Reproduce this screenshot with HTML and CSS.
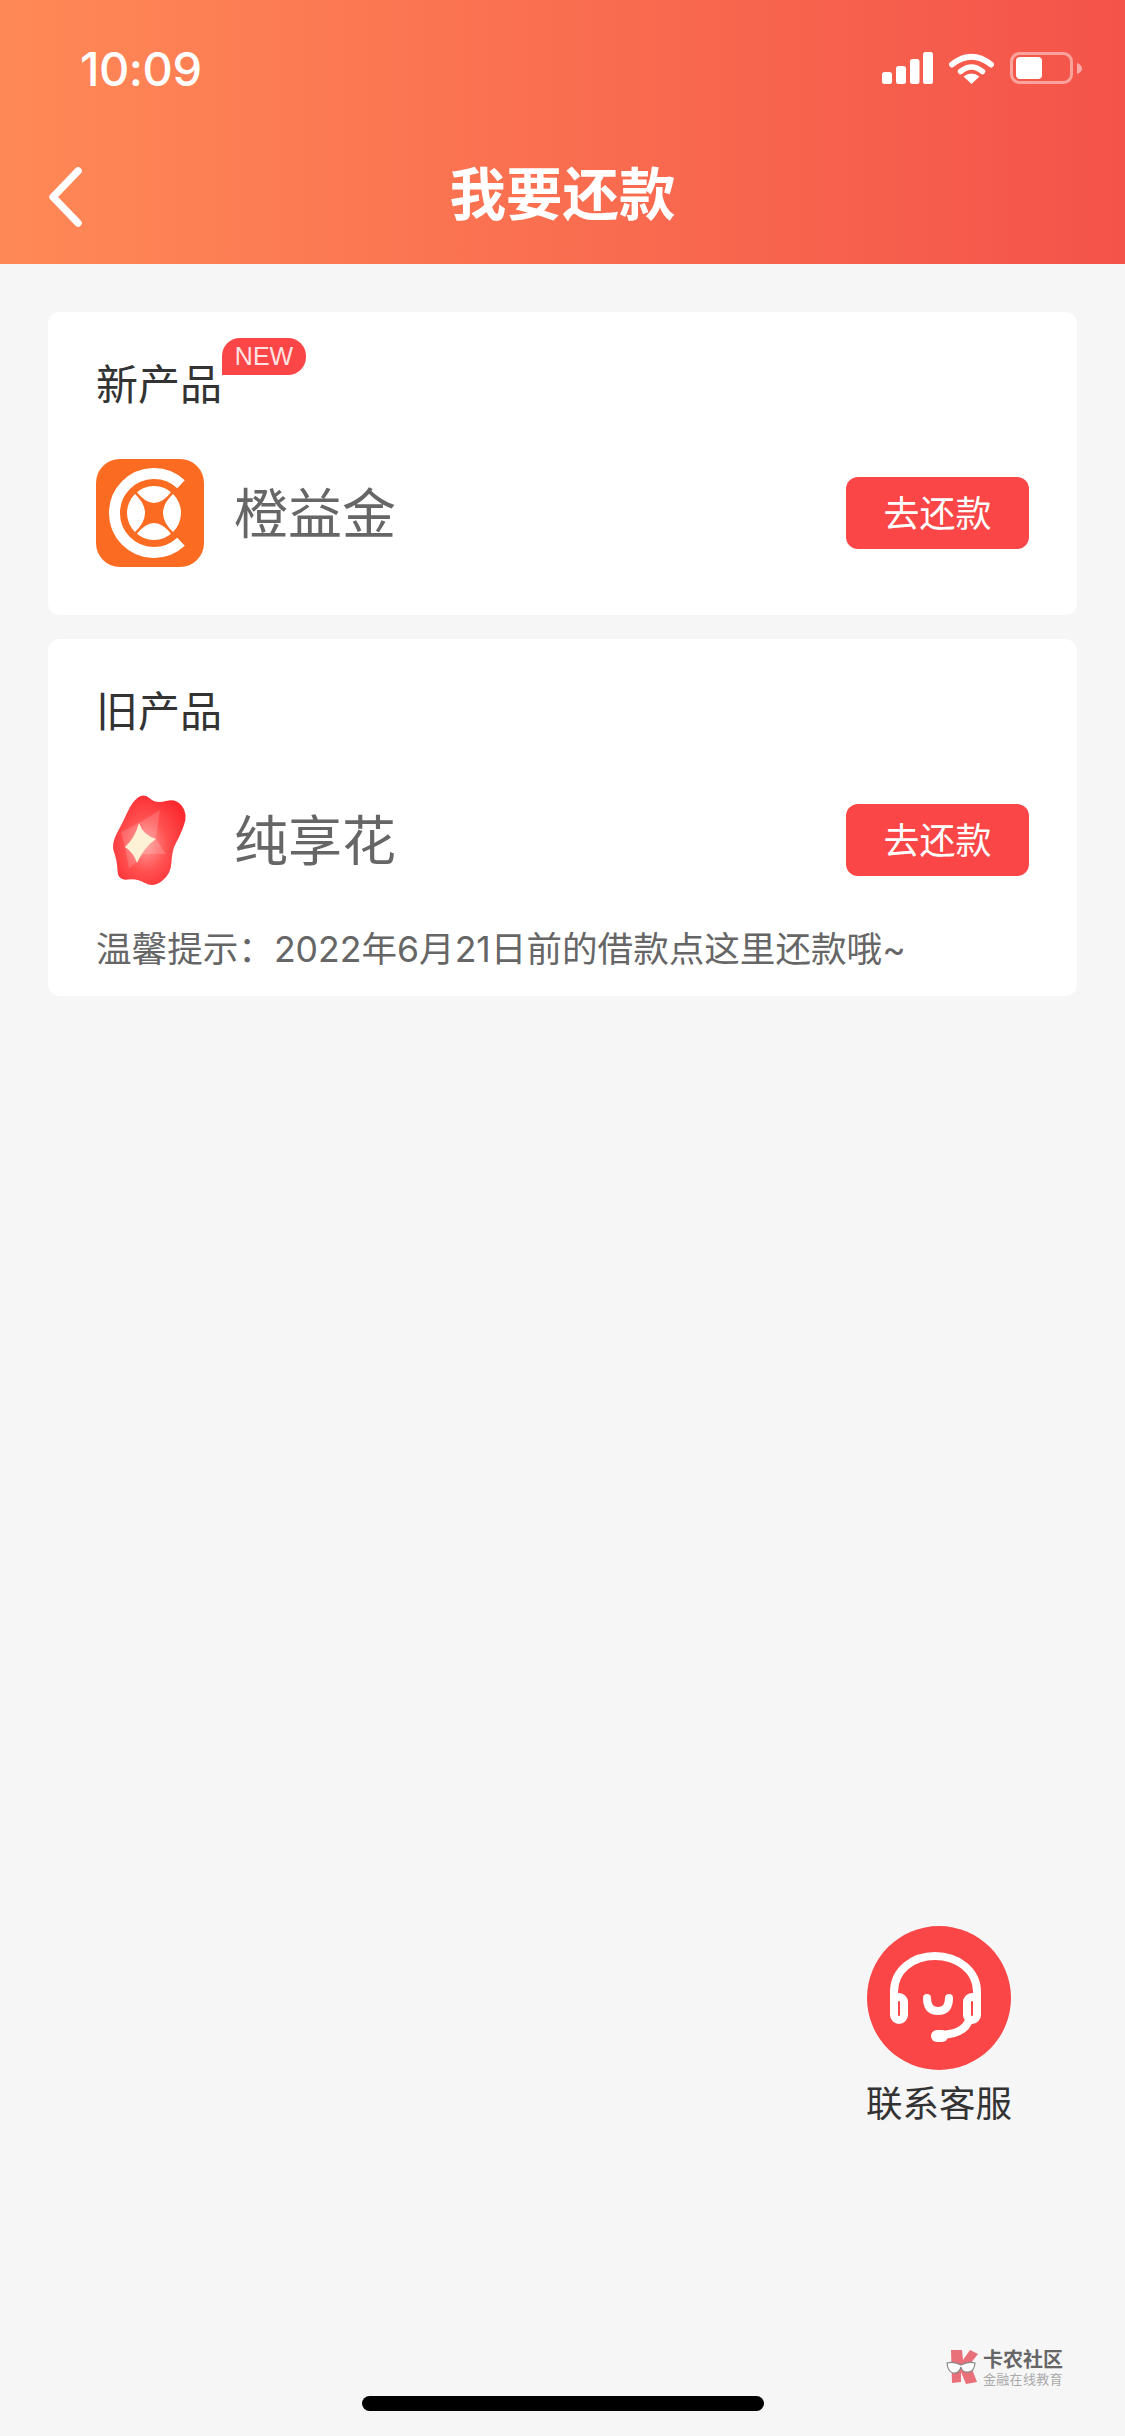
FILE: index.html
```html
<!DOCTYPE html>
<html lang="zh-CN">
<head>
  <meta charset="UTF-8">
  <title>我要还款</title>
  <link rel="stylesheet" href="styles.css">
</head>
<body>

  <header class="header">
    <div class="status-bar">
      <span class="time">10:09</span>
      <div class="status-icons">
        <svg class="signal" width="51" height="32" viewBox="0 0 51 32">
          <rect x="0" y="20" width="10" height="12" rx="2.5" fill="#fff"/>
          <rect x="14" y="14" width="10" height="18" rx="2.5" fill="#fff"/>
          <rect x="28" y="7" width="9.500" height="25" rx="2.5" fill="#fff"/>
          <rect x="41" y="0" width="10" height="32" rx="2.5" fill="#fff"/>
        </svg>
        <svg class="wifi" width="45" height="32" viewBox="0 0 45 32">
          <path d="M3 12.500 Q22.500 -3 42 12.500" fill="none" stroke="#fff" stroke-width="6" stroke-linecap="round"/>
          <path d="M11.500 19.500 Q22.500 10.500 33.500 19.500" fill="none" stroke="#fff" stroke-width="5.500" stroke-linecap="round"/>
          <path d="M22.500 32 L14.500 24.500 Q22.500 18.500 30.500 24.500 Z" fill="#fff"/>
        </svg>
        <svg class="battery" width="72" height="32" viewBox="0 0 72 32">
          <rect x="1.500" y="1.500" width="60" height="29" rx="8" fill="none" stroke="#fff" stroke-opacity="0.45" stroke-width="3"/>
          <rect x="6" y="5" width="26" height="22" rx="4" fill="#fff"/>
          <path d="M67 11 Q72 13 72 16.500 Q72 20 67 22 Z" fill="#fff" fill-opacity="0.5"/>
        </svg>
      </div>
    </div>
    <div class="nav-bar">
      <svg class="back" width="36" height="60" viewBox="0 0 36 60">
        <path d="M31 4 L6 30 L31 56" fill="none" stroke="#fff" stroke-width="7.500" stroke-linecap="round" stroke-linejoin="round"/>
      </svg>
      <h1 class="nav-title">我要还款</h1>
    </div>
  </header>

  <main class="content">
    <section class="card">
      <div class="card-title">
        新产品
        <span class="badge-new">NEW</span>
      </div>
      <div class="product">
        <svg class="product-icon" width="108" height="108" viewBox="0 0 108 108">
          <rect width="108" height="108" rx="24" fill="#fb6c22"/>
          <path d="M85 25.200 A39.500 39.500 0 1 0 85 82.800" fill="none" stroke="#fff" stroke-width="11"/>
          <circle cx="58" cy="54" r="27" fill="#fff"/>
          <path d="M38 34 L40 32 Q58 56 76 32 L78 34 Q56 54 78 74 L76 76 Q58 52 40 76 L38 74 Q60 54 38 34 Z" fill="#fb6c22"/>
        </svg>
        <span class="product-name">橙益金</span>
        <button class="repay-btn">去还款</button>
      </div>
    </section>

    <section class="card">
      <div class="card-title">旧产品</div>
      <div class="product">
        <svg class="product-icon" width="108" height="108" viewBox="0 0 108 108">
          <defs>
            <radialGradient id="petal" cx="0.45" cy="0.55" r="0.6">
              <stop offset="0" stop-color="#ff9b95"/>
              <stop offset="0.5" stop-color="#ff5050"/>
              <stop offset="1" stop-color="#fb2a30"/>
            </radialGradient>
          </defs>
          <path d="M54 12.500 Q60 18 70 15 Q80 12 86 20 Q92 28 88 39 Q84 50 80 57 Q76 64 75.500 76 Q75 88 66 95 Q57 102 49 97 Q41 92 31.500 93.500 Q22 95 21.500 84.500 Q21 74 18 66 Q15 58 21 47 Q27 36 31.500 26 Q36 16 42 11.500 Q48 7 54 12.500 Z" fill="url(#petal)"/>
          <path d="M64 24 L60 53 L70 68 L48 68 L33 83 L29 61 L25 46 L43 37 Z" fill="#fff" fill-opacity="0.16"/>
          <path d="M43 37 Q47 49 60 53 Q48 61 41 77 Q38 67 29 61 Q39 52 43 37 Z" fill="#fdf1d6"/>
        </svg>
        <span class="product-name">纯享花</span>
        <button class="repay-btn">去还款</button>
      </div>
      <p class="tip">温馨提示：2022年6月21日前的借款点这里还款哦~</p>
    </section>
  </main>

  <div class="service">
    <svg width="144" height="144" viewBox="0 0 144 144">
      <circle cx="72" cy="72" r="72" fill="#fa4646"/>
      <g fill="none" stroke="#fff" stroke-width="8" stroke-linecap="round" stroke-linejoin="round">
        <path d="M27 76 V66 C27 44 46 30 68 30 C90 30 110 44 110 66 V76"/>
        <rect x="27" y="71" width="10" height="23" rx="5"/>
        <rect x="100" y="71" width="10" height="23" rx="5"/>
        <path d="M60 72 Q60 85 71 85 Q82 85 82 72"/>
        <path d="M102 94 Q98 107 76 109"/>
        <path d="M70 110 H75" stroke-width="12"/>
      </g>
    </svg>
    <span class="service-label">联系客服</span>
  </div>

  <div class="watermark">
    <svg width="32" height="35" viewBox="0 0 32 35">
      <path d="M5 1 H16 L17 11 L24 1 L32 5 L24 15 L31 33 L20 35 L15 23 L15 33 L6 34 Z" fill="#e96f78"/>
      <path d="M1 14 Q8 12 15 16 Q22 12 29 14 Q28 24 21 23 Q16 23 15 18 Q13 25 7 24 Q2 23 1 14 Z" fill="#fff" stroke="#888" stroke-width="1.200"/>
    </svg>
    <div class="watermark-text">
      <span class="watermark-name">卡农社区</span>
      <span class="watermark-sub">金融在线教育</span>
    </div>
  </div>

  <div class="home-indicator"></div>

</body>
</html>
```

FILE: styles.css
```css
* {
  box-sizing: border-box;
}

body {
  position: relative;
  width: 1125px;
  height: 2436px;
  margin: 0;
  overflow: hidden;
  background-color: #f6f6f7;
  font-family: "Liberation Sans", "Noto Sans CJK SC", sans-serif;
}

.header {
  height: 264px;
  padding-top: 44px;
  background: linear-gradient(90deg, #ff8956 0%, #f4534a 100%);
  color: #fff;
}

.status-bar {
  display: flex;
  justify-content: space-between;
  align-items: center;
  height: 48px;
  padding: 0 43px 0 80px;
}

.time {
  font-family: Inter, "Liberation Sans", sans-serif;
  font-size: 47px;
  font-weight: 500;
  letter-spacing: -0.5px;
}

.status-icons {
  display: flex;
  align-items: center;
  gap: 16px;
}

.nav-bar {
  position: relative;
  display: flex;
  justify-content: center;
  align-items: center;
  height: 80px;
  margin-top: 64px;
}

.back {
  position: absolute;
  left: 47px;
  top: 11px;
}

.nav-title {
  margin: 0;
  font-size: 56.500px;
  font-weight: 700;
  line-height: 80px;
}

.content {
  display: flex;
  flex-direction: column;
  gap: 24px;
  padding: 48px 48px 0;
}

.card {
  padding: 45px 48px 48px;
  background-color: #fff;
  border-radius: 12px;
}

.card:last-child {
  padding-bottom: 21px;
}

.card-title {
  position: relative;
  font-size: 42px;
  line-height: 58px;
  color: #333;
}

.badge-new {
  position: absolute;
  left: 126px;
  top: -19px;
  width: 84px;
  height: 37px;
  border-radius: 18px 18px 18px 0;
  background-color: #fa4646;
  color: #fde3e3;
  font-size: 25px;
  line-height: 37px;
  text-align: center;
}

.product {
  display: flex;
  align-items: center;
  gap: 30px;
  margin-top: 44px;
}

.product-name {
  flex: 1;
  padding-bottom: 6px;
  font-size: 54px;
  color: #666;
}

.repay-btn {
  width: 183px;
  height: 72px;
  padding: 0 0 4px;
  border: none;
  border-radius: 12px;
  background-color: #fa4646;
  color: #fff;
  font-family: inherit;
  font-size: 36px;
}

.tip {
  margin: 31px 0 0;
  font-family: Inter, "Noto Sans CJK SC", sans-serif;
  font-size: 35.600px;
  line-height: 50px;
  color: #666;
}

.service {
  position: absolute;
  left: 859px;
  top: 1926px;
  display: flex;
  flex-direction: column;
  align-items: center;
  width: 160px;
}

.service-label {
  margin-top: 10px;
  font-size: 36.500px;
  line-height: 50px;
  color: #333;
}

.watermark {
  position: absolute;
  left: 946px;
  top: 2349px;
  display: flex;
  gap: 5px;
}

.watermark-text {
  display: flex;
  flex-direction: column;
  padding-top: 1px;
}

.watermark-name {
  font-size: 20px;
  font-weight: 700;
  line-height: 20px;
  color: #666;
}

.watermark-sub {
  margin-top: 3px;
  font-size: 13px;
  letter-spacing: 0.300px;
  line-height: 14px;
  color: #aaa;
}

.home-indicator {
  position: absolute;
  left: 362px;
  top: 2396px;
  width: 402px;
  height: 15px;
  border-radius: 8px;
  background-color: #000;
}
```
